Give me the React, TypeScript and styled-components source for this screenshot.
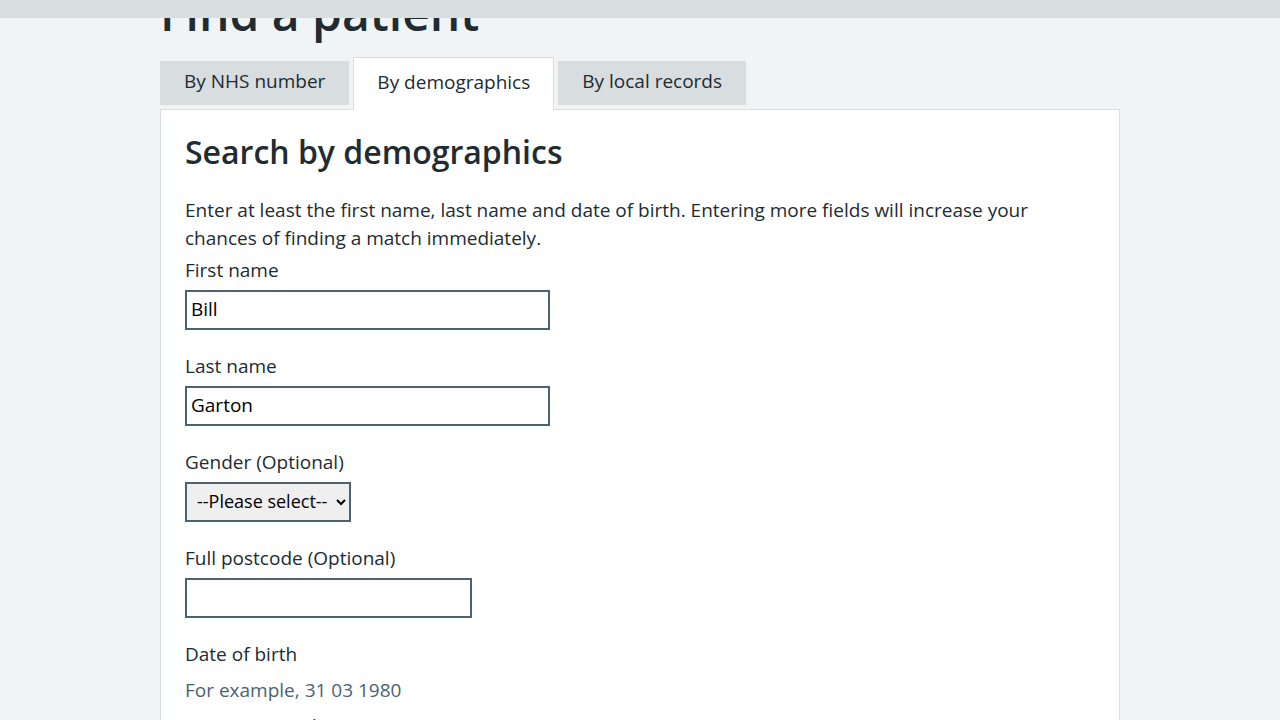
import React from "react";
import styled, { createGlobalStyle } from "styled-components";

const Global = createGlobalStyle`
  html, body { margin: 0; padding: 0; }
  body {
    background: #f0f4f5;
    color: #212b32;
    font-family: "Open Sans", Arial, sans-serif;
    overflow: hidden;
  }
  * { box-sizing: border-box; }
`;

const TopBar = styled.div`
  position: fixed;
  top: 0;
  left: 0;
  right: 0;
  height: 18px;
  background: #d8dde0;
  z-index: 10;
`;

const Container = styled.main`
  width: 960px;
  margin: 0 auto;
`;

const PageTitle = styled.h1`
  font-size: 48px;
  line-height: 56px;
  font-weight: 600;
  margin: -15px 0 16px;
  color: #212b32;
`;

const TabList = styled.ul`
  list-style: none;
  margin: 0;
  padding: 0;
  display: flex;
  align-items: flex-start;
  gap: 4px;
  height: 52px;
`;

const Tab = styled.li<{ $active?: boolean }>`
  font-size: 19px;
  line-height: 28px;
  position: relative;
  z-index: ${(p) => (p.$active ? 2 : 1)};
  margin-top: ${(p) => (p.$active ? "0" : "4px")};
  padding: ${(p) => (p.$active ? "10px 23px 14px" : "6px 24px 10px")};
  background: ${(p) => (p.$active ? "#ffffff" : "#d8dde0")};
  border: ${(p) => (p.$active ? "1px solid #d8dde0" : "none")};
  border-bottom: none;
  color: #212b32;
`;

const Panel = styled.section`
  background: #ffffff;
  border: 1px solid #d8dde0;
  padding: 22px 24px 40px;
`;

const PanelHeading = styled.h2`
  font-size: 32px;
  line-height: 40px;
  font-weight: 600;
  margin: 0 0 24px;
`;

const Intro = styled.p`
  font-size: 19px;
  line-height: 28px;
  margin: 0 0 4px;
`;

const Group = styled.div`
  margin-bottom: 22px;
`;

const Label = styled.label`
  display: block;
  font-size: 19px;
  line-height: 28px;
  margin-bottom: 6px;
`;

const Input = styled.input<{ $w: number }>`
  display: block;
  width: ${(p) => p.$w}px;
  height: 40px;
  border: 2px solid #4c6272;
  padding: 2px 4px 4px;
  font-family: inherit;
  font-size: 19px;
  color: #000;
  background: #fff;
  border-radius: 0;
`;

const Select = styled.select`
  display: block;
  width: 166px;
  height: 40px;
  border: 2px solid #4c6272;
  padding: 2px 2px 4px 6px;
  font-family: inherit;
  font-size: 18px;
  color: #000;
  background-color: #efefef;
  border-radius: 0;
`;

const Fieldset = styled.fieldset`
  border: 0;
  margin: 0;
  padding: 0;
`;

const Legend = styled.legend`
  font-size: 19px;
  line-height: 28px;
  padding: 0;
  margin-bottom: 8px;
`;

const Hint = styled.div`
  font-size: 19px;
  line-height: 28px;
  color: #4c6272;
  margin-bottom: 8px;
`;

const DateRow = styled.div`
  display: flex;
  gap: 24px;
`;

const DateItem = styled.div`
  display: flex;
  flex-direction: column;
`;

const DateLabel = styled.label`
  font-size: 19px;
  line-height: 28px;
  margin-bottom: 6px;
`;

export default function App() {
  return (
    <>
      <Global />
      <TopBar />
      <Container>
        <PageTitle>Find a patient</PageTitle>
        <TabList>
          <Tab>By NHS number</Tab>
          <Tab $active>By demographics</Tab>
          <Tab>By local records</Tab>
        </TabList>
        <Panel>
          <PanelHeading>Search by demographics</PanelHeading>
          <Intro>
            Enter at least the first name, last name and date of birth. Entering more fields will
            increase your chances of finding a match immediately.
          </Intro>
          <Group>
            <Label htmlFor="first">First name</Label>
            <Input id="first" $w={365} defaultValue="Bill" />
          </Group>
          <Group>
            <Label htmlFor="last">Last name</Label>
            <Input id="last" $w={365} defaultValue="Garton" />
          </Group>
          <Group>
            <Label htmlFor="gender">Gender (Optional)</Label>
            <Select id="gender" defaultValue="">
              <option value="">--Please select--</option>
              <option value="m">Male</option>
              <option value="f">Female</option>
            </Select>
          </Group>
          <Group>
            <Label htmlFor="postcode">Full postcode (Optional)</Label>
            <Input id="postcode" $w={287} />
          </Group>
          <Fieldset>
            <Legend>Date of birth</Legend>
            <Hint>For example, 31 03 1980</Hint>
            <DateRow>
              <DateItem>
                <DateLabel htmlFor="day">Day</DateLabel>
                <Input id="day" $w={56} />
              </DateItem>
              <DateItem>
                <DateLabel htmlFor="month">Month</DateLabel>
                <Input id="month" $w={56} />
              </DateItem>
              <DateItem>
                <DateLabel htmlFor="year">Year</DateLabel>
                <Input id="year" $w={80} />
              </DateItem>
            </DateRow>
          </Fieldset>
        </Panel>
      </Container>
    </>
  );
}
